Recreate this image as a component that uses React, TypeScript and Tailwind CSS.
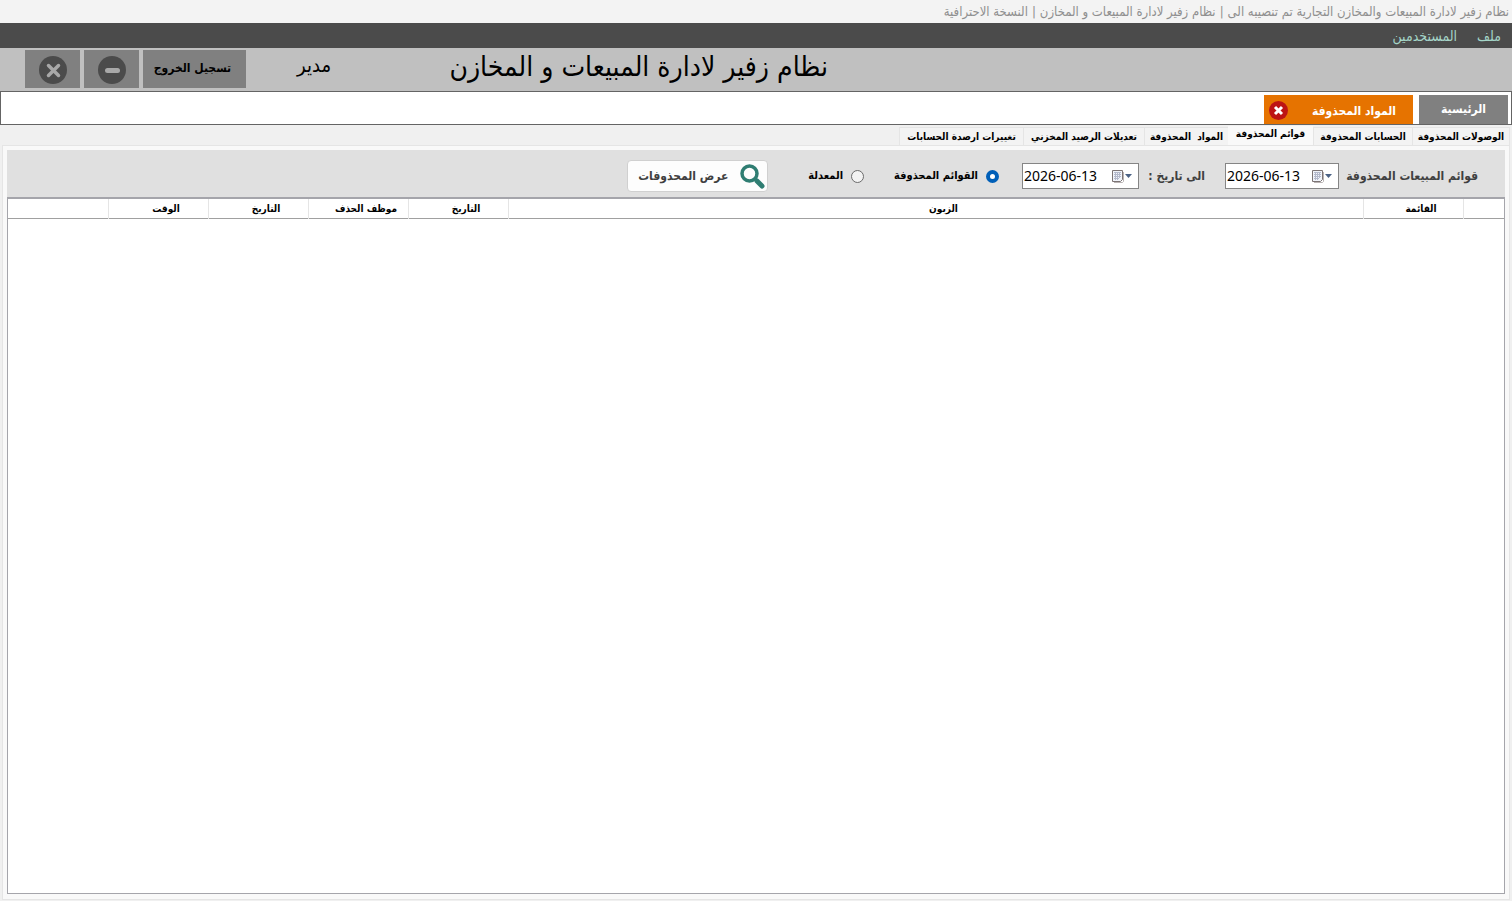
import type {ReactNode} from 'react';

interface Column {
  id: string;
  title: string;
  width?: string;
}

const MENU_ITEMS = ['ملف', 'المستخدمين'];

const SUB_TABS = [
  {title: 'الوصولات المحذوفة', width: 'w-[98px]'},
  {title: 'الحسابات المحذوفة', width: 'w-[99px]'},
  {title: 'قوائم المحذوفة', width: 'w-[85px]', active: true},
  {title: 'المواد  المحذوفة', width: 'w-[84px]'},
  {title: 'تعديلات الرصيد المخزني', width: 'w-[121px]'},
  {title: 'تغييرات ارصدة الحسابات', width: 'w-[124px]'},
];

const COLUMNS: Column[] = [
  {id: 'marker', title: '', width: 'w-[41px]'},
  {id: 'invoice', title: 'القائمة', width: 'w-[100px]'},
  {id: 'customer', title: 'الزبون'},
  {id: 'date', title: 'التاريخ', width: 'w-[100px]'},
  {id: 'employee', title: 'موظف الحذف', width: 'w-[100px]'},
  {id: 'deletedDate', title: 'التاريخ', width: 'w-[100px]'},
  {id: 'deletedTime', title: 'الوقت', width: 'w-[100px]'},
  {id: 'actions', title: '', width: 'w-[100px]'},
];

function CalendarIcon() {
  return (
    <svg width="21" height="14" viewBox="0 0 21 14" aria-hidden="true">
      <path d="M2 13.5h8.5l1-1V3" fill="none" stroke="#b9b3b3" />
      <path d="M0.5 1.5h10v9l-2 2h-8z" fill="#f1f4fa" stroke="#7c7474" />
      <path
        d="M2 3.5h7M2 5.5h7M2 7.5h7M2 9.5h5M3.5 3v8M5.5 3v8M7.5 3v6"
        stroke="#b4b9cb"
        strokeWidth="1"
      />
      <path d="M13 5h7l-3.5 4z" fill="#4a6184" />
    </svg>
  );
}

function DateField({label, width}: {label: string; width: string}) {
  return (
    <div dir="ltr" className={`flex h-[26px] items-center border border-[#858585] bg-white ${width}`}>
      <input
        type="text"
        aria-label={label}
        defaultValue="2026-06-13"
        className="w-full min-w-0 flex-1 pl-px font-[Noto_Sans,sans-serif] text-[14px] font-normal text-black outline-none"
      />
      <button type="button" aria-label="فتح التقويم" className="mr-[5px] shrink-0">
        <CalendarIcon />
      </button>
    </div>
  );
}

function RadioOption({label, checked}: {label: string; checked?: boolean}) {
  return (
    <label className="flex items-center gap-2 whitespace-nowrap">
      <input
        type="radio"
        name="kind"
        defaultChecked={checked}
        className="size-[13px] appearance-none rounded-full border border-[#6b6b6b] bg-[#f3f3f3] checked:border-4 checked:border-[#005fb8] checked:bg-white"
      />
      {label}
    </label>
  );
}

function WindowButton({label, children}: {label: string; children: ReactNode}) {
  return (
    <button
      type="button"
      aria-label={label}
      className="flex w-[55px] items-center justify-center bg-[#808080] pt-[2px]"
    >
      <svg width="28" height="28" viewBox="0 0 28 28" aria-hidden="true">
        <circle cx="14" cy="14" r="14" fill="#4b4b4b" />
        {children}
      </svg>
    </button>
  );
}

export default function App() {
  return (
    <div
      dir="rtl"
      className="flex min-h-screen flex-col bg-[#f0f0f0] font-[DejaVu_Sans_Condensed,DejaVu_Sans,sans-serif] text-black"
    >
      <div className="flex h-[23px] items-center gap-1 bg-[#f3f3f3] px-[3px] pt-px text-[13px] text-[#8f8f8f]">
        <span>نظام زفير لادارة المبيعات والمخازن التجارية تم تنصيبه الى</span>
        <span>|</span>
        <span>نظام زفير لادارة المبيعات و المخازن</span>
        <span>|</span>
        <span>النسخة الاحترافية</span>
      </div>

      <nav className="flex h-[25px] items-center gap-5 bg-[#4b4b4b] px-[11px] pt-px text-[14px] text-[#a5d5c8]">
        {MENU_ITEMS.map((item) => (
          <button key={item} type="button">
            {item}
          </button>
        ))}
      </nav>

      <header className="flex h-[43px] bg-[#c0c0c0] pl-[25px]">
        <h1 className="ms-[46%] whitespace-nowrap text-[28px] leading-[38px]">
          نظام زفير لادارة المبيعات و المخازن
        </h1>
        <span className="ms-auto me-[51px] text-[20px] leading-[34px]">مدير</span>
        <div className="flex gap-1 pt-[2px] pb-[3px]">
          <button type="button" className="w-[103px] bg-[#808080] pb-[2px] pr-1 text-[12px] font-bold">
            تسجيل الخروج
          </button>
          <WindowButton label="تصغير">
            <path d="M9.5 14.5h10" stroke="#a8a8a8" strokeWidth="5" strokeLinecap="round" />
          </WindowButton>
          <WindowButton label="اغلاق">
            <path
              d="M9.5 9.5l10 10M19.5 9.5l-10 10"
              stroke="#a8a8a8"
              strokeWidth="3.5"
              strokeLinecap="round"
            />
          </WindowButton>
        </div>
      </header>

      <div className="flex h-[34px] gap-[6px] border border-[#646464] bg-white px-[3px] pt-[3px] text-[12px] font-bold text-white">
        <button type="button" className="w-[89px] bg-[#808080] pb-[2px]">
          الرئيسية
        </button>
        <div className="flex w-[149px] items-center justify-between bg-[#e67300] ps-[17px] pe-[5px]">
          <button type="button" className="pt-[2px]">
            المواد المحذوفة
          </button>
          <button type="button" aria-label="اغلاق التبويب" className="pt-px">
            <svg width="19" height="19" viewBox="0 0 19 19" aria-hidden="true">
              <circle cx="9.5" cy="9.5" r="9.5" fill="#bd1414" />
              <path d="M6 6l7 7M13 6l-7 7" stroke="#fff" strokeWidth="3" />
            </svg>
          </button>
        </div>
      </div>

      <div className="flex h-[20px] items-end px-[2px] text-[10px] font-bold">
        {SUB_TABS.map((tab) => (
          <button
            key={tab.title}
            type="button"
            className={`whitespace-pre ${tab.width} ${
              tab.active
                ? 'h-[19px] bg-[#f9f9f9] pb-1'
                : 'h-[18px] border-t border-l border-[#e5e5e5] bg-[#f3f3f3] first:border-r'
            }`}
          >
            {tab.title}
          </button>
        ))}
      </div>

      <main className="mx-[2px] mb-px flex flex-1 flex-col border border-[#e5e5e5] bg-[#f9f9f9] px-1 pt-1 pb-[5px]">
        <form className="flex h-[47px] items-center bg-[#e0e0e0] ps-[27px] pt-1 text-[12px] font-bold">
          <span className="w-[139px] whitespace-nowrap text-[#404040]">قوائم المبيعات المحذوفة</span>
          <DateField label="من تاريخ" width="w-[114px]" />
          <span className="ms-5 w-[66px] whitespace-nowrap text-[#404040]">الى تاريخ :</span>
          <DateField label="الى تاريخ" width="w-[117px]" />
          <div className="ms-[23px] flex gap-[30px] pt-px text-[11px]">
            <RadioOption label="القوائم المحذوفة" checked />
            <RadioOption label="المعدلة" />
          </div>
          <button
            type="button"
            className="ms-10 flex h-8 w-[141px] items-center justify-between whitespace-nowrap rounded-[4px] border border-[#d0d0d0] bg-[#fdfdfd] pr-[2px] pl-[10px] text-[#404040]"
          >
            <svg width="25" height="26" viewBox="0 0 25 26" aria-hidden="true">
              <circle cx="9.5" cy="10.5" r="7.5" fill="none" stroke="#2f7d72" strokeWidth="3.5" />
              <path d="M15 16l2 2" stroke="#2f7d72" strokeWidth="3" />
              <path d="M17 18l5 5" stroke="#2f7d72" strokeWidth="5" strokeLinecap="round" />
            </svg>
            عرض المحذوفات
          </button>
        </form>

        <div className="flex-1 border border-t-2 border-[#a5a5ab] bg-white">
          <table className="w-full table-fixed border-collapse text-[10px] font-bold">
            <thead>
              <tr className="h-[19px] border-b border-[#a0a0a0]">
                {COLUMNS.map((col) => (
                  <th
                    key={col.id}
                    scope="col"
                    className={`whitespace-nowrap border-l border-[#e5e5e5] border-b-[#a0a0a0] pl-4 last:border-l-0 ${col.width ?? ''}`}
                  >
                    {col.title}
                  </th>
                ))}
              </tr>
            </thead>
            <tbody />
          </table>
        </div>
      </main>
    </div>
  );
}
